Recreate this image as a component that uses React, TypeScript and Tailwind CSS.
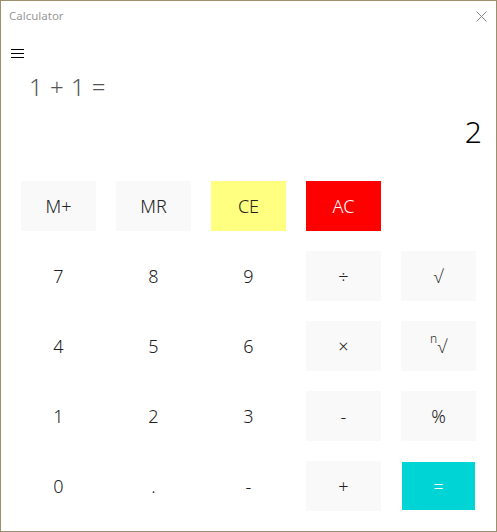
import { ReactNode } from 'react'

type Key = { label: ReactNode; tone?: 'plain' | 'op' | 'yellow' | 'red' | 'equals' | 'empty' }

const keys: Key[] = [
  { label: 'M+', tone: 'op' },
  { label: 'MR', tone: 'op' },
  { label: 'CE', tone: 'yellow' },
  { label: 'AC', tone: 'red' },
  { label: '', tone: 'empty' },
  { label: '7' },
  { label: '8' },
  { label: '9' },
  { label: '÷', tone: 'op' },
  { label: '√', tone: 'op' },
  { label: '4' },
  { label: '5' },
  { label: '6' },
  { label: '×', tone: 'op' },
  {
    label: (
      <span className="flex items-start">
        <span className="-mt-[4px] text-[12px]">n</span>
        <span>√</span>
      </span>
    ),
    tone: 'op',
  },
  { label: '1' },
  { label: '2' },
  { label: '3' },
  { label: '-', tone: 'op' },
  { label: '%', tone: 'op' },
  { label: '0' },
  { label: '.' },
  { label: '-' },
  { label: '+', tone: 'op' },
  { label: '=', tone: 'equals' },
]

const toneClass = {
  plain: 'bg-white text-[#222]',
  op: 'bg-[#f9f9f9] text-[#222]',
  yellow: 'bg-[#ffff80] text-[#222]',
  red: 'bg-[#ff0000] text-white',
  equals: 'm-px bg-[#00d4d4] text-white',
  empty: 'bg-transparent',
}

function CalcKey({ k }: { k: Key }) {
  const tone = k.tone ?? 'plain'
  if (tone === 'empty') return <div />
  return (
    <button className={`flex items-center justify-center text-[18px] font-light leading-none ${toneClass[tone]}`}>
      {k.label}
    </button>
  )
}

export default function App() {
  return (
    <div
      className="flex h-[532px] w-[497px] flex-col border border-[#9c8f6e] bg-white"
      style={{ fontFamily: '"Noto Sans", "Open Sans", sans-serif' }}
    >
      {/* Title bar */}
      <div className="flex h-[30px] shrink-0 items-center justify-between pl-[8px] pr-[9px]">
        <span className="text-[11.5px] text-[#999]">Calculator</span>
        <svg width="11" height="11" viewBox="0 0 11 11" className="text-[#888]">
          <path d="M0.5 0.5 L10.5 10.5 M10.5 0.5 L0.5 10.5" stroke="currentColor" strokeWidth="1" />
        </svg>
      </div>

      {/* Menu */}
      <div className="mt-[17px] pl-[10px]">
        <svg width="13" height="11" viewBox="0 0 13 11" className="block">
          <path d="M0 1.5 H13 M0 5.5 H13 M0 9.5 H13" stroke="#000" strokeWidth="1" />
        </svg>
      </div>

      {/* Display */}
      <div className="mt-[16px] pl-[28px] text-[24px] font-light leading-none text-[#555] [word-spacing:1px]">
        1 + 1 =
      </div>
      <div className="mt-[18px] pr-[14px] text-right text-[30px] font-light leading-none text-black">2</div>

      {/* Keys */}
      <div className="mt-[34px] grid grid-cols-[repeat(5,75px)] auto-rows-[50px] gap-x-[20px] gap-y-[20px] pl-[20px]">
        {keys.map((k, i) => (
          <CalcKey key={i} k={k} />
        ))}
      </div>
    </div>
  )
}
